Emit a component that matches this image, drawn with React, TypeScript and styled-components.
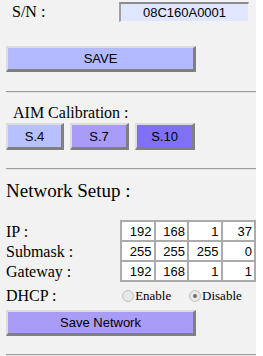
import React from 'react';
import styled, { createGlobalStyle, css } from 'styled-components';

const GlobalStyle = createGlobalStyle`
  html, body {
    margin: 0;
    padding: 0;
    background: #ffffff;
  }
  body {
    font-family: "Liberation Serif", "Times New Roman", serif;
    color: #000;
  }
`;

const serif = `"Liberation Serif", "Times New Roman", serif`;
const sans = `"Liberation Sans", Arial, sans-serif`;

const Panel = styled.div`
  width: 250px;
  height: 356px;
  background: #f2f2f2;
  padding-left: 6px;
  display: flex;
  flex-direction: column;
  overflow: hidden;
`;

const SerialRow = styled.div`
  display: grid;
  grid-template-columns: 113px 130px;
  align-items: center;
  margin-top: 2px;
  height: 20px;
`;

const Label = styled.span<{ $size?: number }>`
  font-family: ${serif};
  font-size: ${({ $size }) => $size ?? 16}px;
  line-height: 18px;
  white-space: nowrap;
`;

const SerialLabel = styled(Label)`
  padding-left: 6px;
`;

const SerialBox = styled.div`
  box-sizing: border-box;
  height: 20px;
  background: #e1e6ff;
  border-style: solid;
  border-width: 2px 1px 1px 2px;
  border-color: #8c8c8c #f2f2f2 #f2f2f2 #a0a0a0;
  font-family: ${sans};
  font-size: 13px;
  line-height: 17px;
  text-align: center;
`;

const Button = styled.button<{ $bg: string; $w: number; $h?: number }>`
  box-sizing: border-box;
  width: ${({ $w }) => $w}px;
  height: ${({ $h }) => $h ?? 26}px;
  padding: 0;
  background: ${({ $bg }) => $bg};
  border-style: solid;
  border-width: 2px 3px 3px 2px;
  border-color: #dcdcdc #808080 #808080 #dcdcdc;
  font-family: ${sans};
  font-size: 13px;
  color: #000;
  cursor: pointer;
`;

const Rule = styled.div<{ $top: number }>`
  margin-top: ${({ $top }) => $top}px;
  height: 0;
  border-top: 1px solid #9c9c9c;
  border-bottom: 1px solid #e4e4e4;
`;

const Heading = styled.div<{ $top: number; $size: number; $lh: number }>`
  margin-top: ${({ $top }) => $top}px;
  font-family: ${serif};
  font-size: ${({ $size }) => $size}px;
  line-height: ${({ $lh }) => $lh}px;
  ${({ $size }) =>
    $size === 16 &&
    css`
      padding-left: 7px;
    `}
`;

const CalRow = styled.div`
  display: flex;
  gap: 6px;
  margin-top: 1px;
`;

const NetTable = styled.div`
  display: flex;
  margin-top: 18px;
`;

const LabelCol = styled.div`
  width: 114px;
  display: grid;
  grid-template-rows: repeat(3, 20px);
  padding-top: 2px;
  align-items: center;
`;

const OctetGrid = styled.div`
  width: 136px;
  box-sizing: border-box;
  display: grid;
  grid-template-columns: repeat(4, 1fr);
  grid-template-rows: repeat(3, 18px);
  gap: 2px;
  padding: 2px;
  background: #ababab;
`;

const Octet = styled.input`
  box-sizing: border-box;
  width: 100%;
  height: 100%;
  min-width: 0;
  margin: 0;
  border: 0;
  padding: 0 2px 0 0;
  background: #ffffff;
  font-family: ${sans};
  font-size: 13px;
  text-align: right;
  color: #000;
  outline: none;
`;

const DhcpRow = styled.div`
  display: flex;
  align-items: center;
  height: 22px;
  margin-top: 4px;
`;

const DhcpLabel = styled(Label)`
  width: 118px;
`;

const Choice = styled.label`
  display: flex;
  align-items: center;
  width: 68px;
  font-family: ${serif};
  font-size: 13px;
  color: #000;
`;

const RadioDot = styled.span<{ $on?: boolean }>`
  box-sizing: border-box;
  width: 12px;
  height: 12px;
  margin-right: 1px;
  border-radius: 50%;
  border: 1px solid #c2c2c2;
  background: #e8e8e8;
  display: grid;
  place-items: center;
  &::after {
    content: '';
    width: 4px;
    height: 4px;
    border-radius: 50%;
    background: ${({ $on }) => ($on ? '#6e6e6e' : 'transparent')};
  }
`;

const SaveNetWrap = styled.div`
  margin-top: 4px;
`;

const rows = [
  { label: 'IP :', values: ['192', '168', '1', '37'] },
  { label: 'Submask :', values: ['255', '255', '255', '0'] },
  { label: 'Gateway :', values: ['192', '168', '1', '1'] },
];

export default function App() {
  return (
    <>
      <GlobalStyle />
      <Panel>
        <SerialRow>
          <SerialLabel>S/N :</SerialLabel>
          <SerialBox>08C160A0001</SerialBox>
        </SerialRow>

        <div style={{ marginTop: 24 }}>
          <Button $bg="#b3baff" $w={190}>SAVE</Button>
        </div>

        <Rule $top={19} />

        <Heading $top={11} $size={16} $lh={18}>AIM Calibration :</Heading>
        <CalRow>
          <Button $bg="#b8c1ff" $w={58} $h={27}>S.4</Button>
          <Button $bg="#a89cf8" $w={59} $h={27}>S.7</Button>
          <Button $bg="#7f70f5" $w={60} $h={27}>S.10</Button>
        </CalRow>

        <Rule $top={18} />

        <Heading $top={10} $size={19} $lh={22}>Network Setup :</Heading>

        <NetTable>
          <LabelCol>
            {rows.map((r) => (
              <Label key={r.label}>{r.label}</Label>
            ))}
          </LabelCol>
          <OctetGrid>
            {rows.map((r) =>
              r.values.map((v, i) => (
                <Octet key={r.label + i} defaultValue={v} readOnly />
              ))
            )}
          </OctetGrid>
        </NetTable>

        <DhcpRow>
          <DhcpLabel>DHCP :</DhcpLabel>
          <Choice>
            <RadioDot />
            Enable
          </Choice>
          <Choice>
            <RadioDot $on />
            Disable
          </Choice>
        </DhcpRow>

        <SaveNetWrap>
          <Button $bg="#a99cf7" $w={190}>Save Network</Button>
        </SaveNetWrap>

        <Rule $top={18} />
      </Panel>
    </>
  );
}
